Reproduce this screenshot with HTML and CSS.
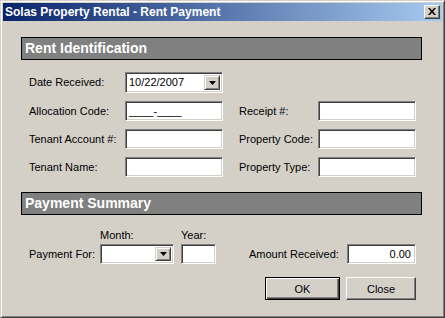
FILE: index.html
```html
<!DOCTYPE html>
<html>
<head>
<meta charset="utf-8">
<link rel="stylesheet" href="styles.css">
</head>
<body>
<div class="window">
  <div class="titlebar">
    <span class="title">Solas Property Rental - Rent Payment</span>
    <span class="tclose"><svg width="8" height="7" viewBox="0 0 8 7"><path d="M0 0h2l2 2.5L6 0h2L5 3.5 8 7H6L4 4.5 2 7H0l3-3.5z" fill="#000"/></svg></span>
  </div>
  <div class="body">
    <div class="section-head">Rent Identification</div>
    <div class="ident-grid">
      <span class="lbl">Date Received:</span>
      <div class="combo tall"><span class="val">10/22/2007</span><span class="drop"><svg width="7" height="4" viewBox="0 0 7 4"><path d="M0 0h7L3.5 4z" fill="#000"/></svg></span></div>
      <span></span><span></span><span></span>

      <span class="lbl">Allocation Code:</span>
      <div class="field"><span class="val mask">____-____</span></div>
      <span></span>
      <span class="lbl">Receipt #:</span>
      <div class="field"></div>

      <span class="lbl">Tenant Account #:</span>
      <div class="field"></div>
      <span></span>
      <span class="lbl">Property Code:</span>
      <div class="field"></div>

      <span class="lbl">Tenant Name:</span>
      <div class="field"></div>
      <span></span>
      <span class="lbl">Property Type:</span>
      <div class="field"></div>
    </div>
    <div class="section-head second">Payment Summary</div>
    <div class="pay-row">
      <span class="lbl pf">Payment For:</span>
      <div class="col month">
        <span class="cap">Month:</span>
        <div class="combo"><span class="val"></span><span class="drop"><svg width="7" height="4" viewBox="0 0 7 4"><path d="M0 0h7L3.5 4z" fill="#000"/></svg></span></div>
      </div>
      <div class="col year">
        <span class="cap">Year:</span>
        <div class="field"></div>
      </div>
      <span class="lbl amt-lbl">Amount Received:</span>
      <div class="field amt"><span class="val right">0.00</span></div>
    </div>
    <div class="buttons">
      <div class="btn default"><span>OK</span></div>
      <div class="btn close">Close</div>
    </div>
  </div>
</div>
</body>
</html>
```
FILE: styles.css
```css
html, body {
  margin: 0;
  padding: 0;
  background: #d4d0c8;
}
.window {
  width: 445px;
  height: 318px;
  box-sizing: border-box;
  background: #d4d0c8;
  border-top: 1px solid #d4d0c8;
  border-left: 1px solid #d4d0c8;
  border-right: 1px solid #404040;
  border-bottom: 1px solid #404040;
  box-shadow: inset 1px 1px #ffffff, inset -1px -1px #808080;
  padding: 2px;
  overflow: hidden;
  font-family: "Liberation Sans", Arial, sans-serif;
  font-size: 11px;
  color: #000;
}
.titlebar {
  height: 18px;
  background: linear-gradient(to right, #0a246a, #a6caf0);
  display: flex;
  align-items: center;
  justify-content: space-between;
  padding: 0 2px 0 2px;
}
.title {
  color: #fff;
  font-weight: bold;
  font-size: 12px;
  line-height: 18px;
  white-space: nowrap;
}
.tclose {
  width: 16px;
  height: 14px;
  box-sizing: border-box;
  background: #d4d0c8;
  border-top: 1px solid #fff;
  border-left: 1px solid #fff;
  border-right: 1px solid #404040;
  border-bottom: 1px solid #404040;
  box-shadow: inset -1px -1px #808080;
  display: flex;
  align-items: center;
  justify-content: center;
  padding-bottom: 1px;
}
.tclose svg { display: block; }
.body {
  padding: 0;
}
.section-head {
  margin: 16px 0 0 18px;
  width: 401px;
  height: 23px;
  box-sizing: border-box;
  border: 1px solid #000;
  background: #808080;
  color: #fff;
  font-weight: bold;
  font-size: 14px;
  line-height: 21px;
  padding-left: 3px;
}
.section-head.second {
  margin-top: 15px;
}
.ident-grid {
  display: grid;
  grid-template-columns: 96px 98px 16px 79px 98px;
  grid-auto-rows: 20px;
  grid-template-rows: 21px;
  row-gap: 8px;
  margin-top: 12px;
  padding-left: 26px;
  align-items: center;
}
.lbl {
  white-space: nowrap;
  line-height: 13px;
}
.field, .combo {
  height: 20px;
  box-sizing: border-box;
  background: #fff;
  border-top: 1px solid #808080;
  border-left: 1px solid #808080;
  border-right: 1px solid #fff;
  border-bottom: 1px solid #fff;
  box-shadow: inset 1px 1px #404040, inset -1px -1px #d4d0c8;
  display: flex;
  align-items: center;
  padding: 0 2px 0 2px;
  position: relative;
}
.combo.tall { height: 21px; }
.combo { padding-right: 2px; }
.val {
  flex: 1;
  padding-left: 1px;
  line-height: 13px;
  white-space: nowrap;
}
.val.right {
  text-align: right;
  padding-right: 2px;
}
.drop {
  width: 16px;
  align-self: stretch;
  margin: 2px 0;
  box-sizing: border-box;
  background: #d4d0c8;
  border-top: 1px solid #d4d0c8;
  border-left: 1px solid #d4d0c8;
  border-right: 1px solid #404040;
  border-bottom: 1px solid #404040;
  box-shadow: inset 1px 1px #fff, inset -1px -1px #808080;
  display: flex;
  align-items: center;
  justify-content: center;
}
.drop svg { display: block; }
.pay-row {
  display: flex;
  align-items: flex-end;
  margin-top: 14px;
  padding-left: 26px;
}
.pf {
  width: 71px;
  height: 20px;
  line-height: 20px;
}
.col {
  display: flex;
  flex-direction: column;
}
.cap {
  height: 15px;
  line-height: 13px;
}
.month { width: 74px; }
.year { width: 35px; margin-left: 7px; }
.amt-lbl {
  margin-left: 33px;
  width: 98px;
  height: 20px;
  line-height: 20px;
}
.amt { width: 69px; }
.buttons {
  display: flex;
  justify-content: flex-end;
  gap: 6px;
  margin-top: 13px;
  padding-right: 26px;
}
.btn {
  height: 23px;
  box-sizing: border-box;
  display: flex;
  align-items: center;
  justify-content: center;
  background: #d4d0c8;
}
.btn.close {
  width: 70px;
  border-top: 1px solid #fff;
  border-left: 1px solid #fff;
  border-right: 1px solid #404040;
  border-bottom: 1px solid #404040;
  box-shadow: inset -1px -1px #808080;
}
.btn.default {
  width: 75px;
  border: 1px solid #000;
  box-shadow: inset 1px 1px #fff, inset -1px -1px #404040, inset -2px -2px #808080;
}
```
